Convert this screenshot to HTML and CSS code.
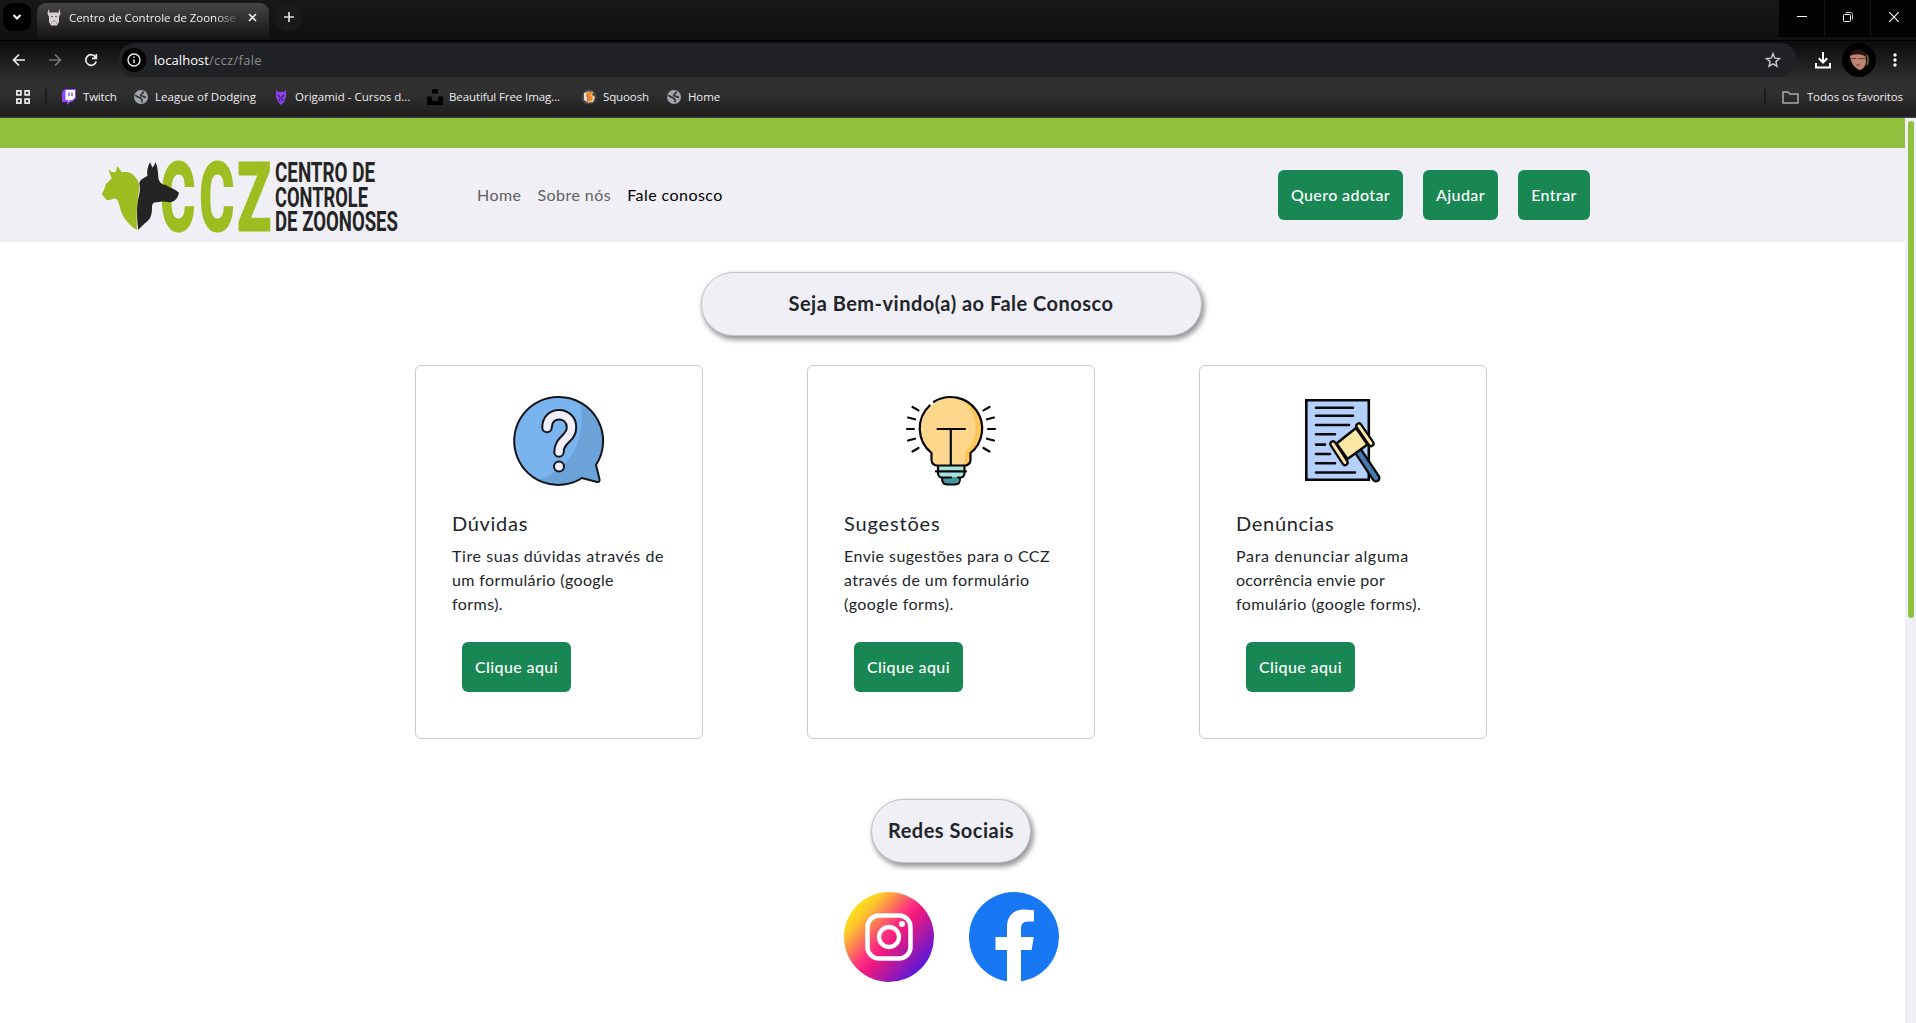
FILE: index.html
```html
<!DOCTYPE html>
<html lang="pt-BR">
<head>
<meta charset="utf-8">
<title>Centro de Controle de Zoonoses</title>
<link rel="stylesheet" href="styles.css">
</head>
<body>
<div class="browser">
  <div class="tabstrip">
    <div class="tab-search"><svg width="28" height="28" viewBox="0 0 28 28"><path d="M10.500 12l3.500 3.500 3.500-3.500" fill="none" stroke="#fff" stroke-width="2"/></svg></div>
    <div class="tab">
      <svg class="tab-favicon" width="14" height="17" viewBox="0 0 14 17"><path d="M1.500 0L3 3.500h8L12.500 0l1 4.500L12 8v5l-2 3.500H4L2 13V8L.5 4.500z" fill="#d8d0d0"/><path d="M2 1l1 3M12 1l-1 3M4 7.500h2M8 7.500h2M6 12h2M4 14h1M9 14h1" stroke="#666" stroke-width="1"/></svg>
      <span class="tab-title">Centro de Controle de Zoonose</span>
      <svg class="tab-close" width="9" height="9" viewBox="0 0 9 9"><path d="M1 1l7 7M8 1l-7 7" stroke="#eee" stroke-width="1.700"/></svg>
    </div>
    <div class="new-tab"><svg width="28" height="28" viewBox="0 0 28 28"><path d="M14 9v10M9 14h10" stroke="#ddd" stroke-width="1.700"/></svg></div>
    <div class="window-controls">
      <div class="win"><svg width="12" height="12" viewBox="0 0 12 12"><path d="M1 5.500h10" stroke="#fff"/></svg></div>
      <div class="win"><svg width="12" height="12" viewBox="0 0 12 12"><path d="M3.500 1.500h5a2 2 0 0 1 2 2v5" fill="none" stroke="#bbb"/><rect x="1.500" y="3.500" width="7" height="7" rx="1" fill="none" stroke="#fff"/></svg></div>
      <div class="win"><svg width="12" height="12" viewBox="0 0 12 12"><path d="M1.200 1.200l9.600 9.600M10.800 1.200l-9.600 9.600" stroke="#fff" stroke-width="1.100"/></svg></div>
    </div>
  </div>
  <div class="toolbar">
    <div class="nav-icons">
      <svg width="14" height="14" viewBox="0 0 14 14"><path d="M13 7H2M7 1.500L1.500 7 7 12.500" fill="none" stroke="#eee" stroke-width="1.700"/></svg>
      <svg width="14" height="14" viewBox="0 0 14 14"><path d="M1 7h11M7 1.500L12.500 7 7 12.500" fill="none" stroke="#777" stroke-width="1.700"/></svg>
      <svg width="14" height="14" viewBox="0 0 14 14"><path d="M11.600 4.200A5.300 5.300 0 1 0 12.200 8.500M12.300 1v4.300H8" fill="none" stroke="#eee" stroke-width="1.700"/></svg>
    </div>
    <div class="omnibox">
      <svg width="24" height="24" viewBox="0 0 24 24"><circle cx="12" cy="12" r="12" fill="#000"/><circle cx="12" cy="12" r="6" fill="none" stroke="#eee" stroke-width="1.400"/><path d="M12 11.500v3.500M12 8.600v1.500" stroke="#eee" stroke-width="1.400"/></svg>
      <div class="url"><span class="url-host">localhost</span><span class="url-path">/ccz/fale</span></div>
      <svg class="star" width="16" height="16" viewBox="0 0 16 16"><path d="M8 1.700l1.800 4.400 4.700.4-3.600 3.100 1.100 4.600L8 11.800l-4 2.400 1.100-4.600-3.600-3.100 4.700-.4z" fill="none" stroke="#c8c8c8" stroke-width="1.400"/></svg>
    </div>
    <svg class="download" width="16" height="17" viewBox="0 0 16 17"><path d="M8 0v10M3.800 6.300L8 10.500l4.200-4.200M1 11v4.500h14V11" fill="none" stroke="#fff" stroke-width="2"/></svg>
    <svg class="avatar" width="34" height="34" viewBox="0 0 34 34"><circle cx="17" cy="17" r="17" fill="#000"/><path d="M7.500 13c2-5 6-7 10.500-6.500 5 1 8.500 5 8.500 10.500s-4 10-9 10c-5-1-9-6-10-14z" fill="#2a1513"/><path d="M8 13c4-2 10-3 15.500.5l.5 6c-1 4-3 6.500-6 7.500-4-1-9-6-10-14z" fill="#c08474"/><path d="M9 15.500h5.500m2 0h6.500M14 22h4" stroke="#6b3c36" stroke-width="1.200"/><path d="M25 12c1.500 3 1.500 7 0 10" stroke="#65703d" stroke-width="1.500" fill="none"/></svg>
    <svg class="dots" width="4" height="14" viewBox="0 0 4 14"><g fill="#fff"><circle cx="2" cy="2" r="1.700"/><circle cx="2" cy="7" r="1.700"/><circle cx="2" cy="12" r="1.700"/></g></svg>
  </div>
  <div class="bookmarks">
    <svg class="apps" width="14" height="14" viewBox="0 0 14 14"><g fill="none" stroke="#eee" stroke-width="1.700"><rect x=".9" y=".9" width="4" height="4"/><rect x="9.100" y=".9" width="4" height="4"/><rect x=".9" y="9.100" width="4" height="4"/><rect x="9.100" y="9.100" width="4" height="4"/></g></svg>
    <div class="separator"></div>
    <div class="bookmark-list">
      <div class="bookmark tight"><svg width="16" height="16" viewBox="0 0 16 16"><path d="M1 3l3-3h11v9l-4 4H9l-3 3v-3H1z" fill="#9146ff"/><path d="M4.500 1H14v7.500L11.500 11H9l-2 2v-2H4.500z" fill="#fff"/><path d="M8 3.500v3.500M11 3.500v3.500" stroke="#9146ff" stroke-width="1.400"/></svg><span>Twitch</span></div>
      <div class="bookmark wide"><svg width="16" height="16" viewBox="0 0 16 16"><circle cx="8" cy="8" r="7" fill="#a1a5ab"/><path d="M2 6.500c2 0 2 1.800 4 1.800 2.500 0 1.500 2.200 3 2.400v2.500M13 8c-2 1-2-1-4-1s-1.500-2 .5-2.500l1-2" fill="none" stroke="#303030" stroke-width="1.700"/></svg><span>League of Dodging</span></div>
      <div class="bookmark"><svg width="16" height="16" viewBox="0 0 16 16"><path d="M3 1l2.500 2h5L13 1v7l-2 5-3 3-3-3-2-5z" fill="#8a42ee"/><path d="M5 6l2 2M11 6L9 8M6 10l1 2M10 10l-1 2M8 8v2" stroke="#32204d" stroke-width="1.200"/></svg><span>Origamid - Cursos d...</span></div>
      <div class="bookmark narrow"><svg width="16" height="16" viewBox="0 0 16 16"><path d="M5 0h6v4.500H5zM0 7.500h5V12h6V7.500h5V16H0z" fill="#000"/></svg><span>Beautiful Free Imag...</span></div>
      <div class="bookmark narrow"><svg width="16" height="16" viewBox="0 0 16 16"><circle cx="8" cy="8" r="7.500" fill="#4a4a4c"/><path d="M3 4l4-1.500 5 .5-1 3 3 2-2 5-5 .5L3 11z" fill="#f6d9bd"/><path d="M5.500 3.500l6.500-1-1 3-2 .5 3 2-1 4-5 1 1-4-2-2z" fill="#f08a24"/><path d="M6 6l1 3-1 3" fill="none" stroke="#8e6f94"/></svg><span>Squoosh</span></div>
      <div class="bookmark narrow"><svg width="16" height="16" viewBox="0 0 16 16"><circle cx="8" cy="8" r="7" fill="#a1a5ab"/><path d="M2 6.500c2 0 2 1.800 4 1.800 2.500 0 1.500 2.200 3 2.400v2.500M13 8c-2 1-2-1-4-1s-1.500-2 .5-2.500l1-2" fill="none" stroke="#303030" stroke-width="1.700"/></svg><span>Home</span></div>
    </div>
    <div class="separator"></div>
    <div class="all-bookmarks narrow"><svg width="17" height="13" viewBox="0 0 17 13"><path d="M1 1h5l2 2h8v9H1z" fill="none" stroke="#aaa" stroke-width="1.500" stroke-linejoin="round"/></svg><span>Todos os favoritos</span></div>
  </div>
</div>
<div class="viewport">
  <div class="page">
    <div class="topbar"></div>
    <header class="navbar">
      <svg class="logo" width="300" height="76" viewBox="0 0 300 76">
        <g class="logo-initials"><text x="60.500" y="73" textLength="34.500" lengthAdjust="spacingAndGlyphs">C</text><text x="99.500" y="73" textLength="34.500" lengthAdjust="spacingAndGlyphs">C</text><text x="137.500" y="73" textLength="33.500" lengthAdjust="spacingAndGlyphs">Z</text></g>
        <path d="M1.700 37.300L4 33 6 27l5.700-5.500L8.300 12c3 3.500 5 3.500 7.700 2.700L17.300 9l4.500 6.300c7-1 11 .7 14 5.400 4 5 4 9 3 14C37 48 36 60 37 73c-4-2-7-5-10.300-9-5-6-6-11-8.400-19-1-3.500-3-3.500-5-3.500-3 2-6 1.500-6.600 1.500z" fill="#9ebd20"/>
        <path d="M39.300 26.300c1-4 4-5 8.200-7.600C46.500 14 48 9 50 5.300l2.700 5.400 3-5.400c2 5 2.300 10 2.600 15.400 1 5 4 7 7.700 7.300 4 3 9 4 13 7.700l-1.300 4c-2 4-5 5.600-8.700 5.600-4-1-8-.8-11.700 0-4 0-5 1-5.300 4.700 0 5-.3 8-2.300 11.700C47 65 42 68 38.300 73c-1.300-9-1.600-17-1-25 1-9 4-14 2-21.700z" fill="#242424"/>
        <g class="logo-name"><text x="175" y="24.700" textLength="100" lengthAdjust="spacingAndGlyphs">CENTRO DE</text><text x="175" y="49.500" textLength="93" lengthAdjust="spacingAndGlyphs">CONTROLE</text><text x="175" y="74" textLength="123" lengthAdjust="spacingAndGlyphs">DE ZOONOSES</text></g>
      </svg>
      <nav class="menu"><a>Home</a><a>Sobre nós</a><a class="active">Fale conosco</a></nav>
      <div class="actions"><a class="btn btn-adopt">Quero adotar</a><a class="btn btn-help">Ajudar</a><a class="btn btn-login">Entrar</a></div>
    </header>
    <main>
      <h1 class="pill pill-wide">Seja Bem-vindo(a) ao Fale Conosco</h1>
      <section class="cards">
        <article class="card card-questions">
          <svg width="90" height="90" viewBox="0 0 90 90"><path d="M45 1a44 44 0 1 0 23 81l15 4c2 .5 3-1 2.500-3L82 69A44 44 0 0 0 45 1z" fill="#7ab4ef"/><path d="M66 7c6 30-4 65-42 77 16 7 31 5 44-2l15 4c2 .5 3-1 2.500-3L82 69c12-20 8-51-16-62z" fill="#6ba2d7"/><path d="M45 1a44 44 0 1 0 23 81l15 4c2 .5 3-1 2.500-3L82 69A44 44 0 0 0 45 1z" fill="none" stroke="#141419" stroke-width="2"/><path d="M33 31.500C33 14 57.500 15 57.500 31.500 57.500 43 45 43 45 56" fill="none" stroke="#141419" stroke-width="11.500" stroke-linecap="round"/><path d="M33 31.500C33 14 57.500 15 57.500 31.500 57.500 43 45 43 45 56" fill="none" stroke="#f0effa" stroke-width="7.500" stroke-linecap="round"/><circle cx="45" cy="70.500" r="5" fill="#f0effa" stroke="#141419" stroke-width="2"/></svg>
          <h2>Dúvidas</h2>
          <p><span>Tire suas dúvidas através de</span><span>um formulário (google</span><span>forms).</span></p>
          <a class="btn btn-card">Clique aqui</a>
        </article>
        <article class="card card-suggestions">
          <svg width="90" height="90" viewBox="0 0 90 90"><path d="M45 1.500A31.500 31.500 0 0 0 26 57v7c0 3 2 5 5 5h28c3 0 5-2 5-5v-7A31.500 31.500 0 0 0 45 1.500z" fill="#ffd78c"/><path d="M56 4c17 14 18 38 3 52v10l-3 3c5 1 8-1 8-5v-7C83 43 81 12 56 4z" fill="#ffc55b"/><path d="M31 70h28v9l-5 3-2 6H38l-3-6-4-4z" fill="#a9e1dc"/><path d="M36 81h17l-2 7H39z" fill="#45959c"/><path d="M28 5.800A31.500 31.500 0 0 1 64.500 57v7c0 3-2.500 5.500-5.500 5.500H31c-3 0-5.500-2.500-5.500-5.500v-7A31.500 31.500 0 0 1 23.700 9.500M31.500 33H59M44.800 33v36M32 70v7c0 3 2 4.500 4 4.500h9M58.500 70v7c0 3-2 4.500-4 4.500H52M30 75.400h30M36 82c0 5 2 6.500 5 6.500h8c4 0 5-2 5-6.500" fill="none" stroke="#080808" stroke-width="2.200" stroke-linecap="round"/><path d="M6.500 11l6 3.400M2 21.500l7 1.800M1 33h7M2 44.500l7-1.800M6.500 55.500l6-3.500M83.500 11l-6 3.400M88 21.500l-7 1.800M89 33h-7M88 44.500l-7-1.800M83.500 55.500l-6-3.500" stroke="#080808" stroke-width="2.200" stroke-linecap="round"/></svg>
          <h2>Sugestões</h2>
          <p><span>Envie sugestões para o CCZ</span><span>através de um formulário</span><span>(google forms).</span></p>
          <a class="btn btn-card">Clique aqui</a>
        </article>
        <article class="card card-reports">
          <svg width="90" height="90" viewBox="0 0 90 90"><path d="M8.300 4.300h62.500v79.500H8.300z" fill="#b5d0fc" stroke="#080808" stroke-width="2.600"/><path d="M18 11.700h37M18 19.700h37M18 29h33M18 38.300h19M18 48.600h9M18 58h14M18 67.300h19M18 76.500h39" stroke="#080808" stroke-width="2.600" stroke-linecap="round"/><path d="M60 55l18 27" stroke="#080808" stroke-width="9" stroke-linecap="round"/><path d="M60 55l18 27" stroke="#4878ac" stroke-width="4.500" stroke-linecap="round"/><path d="M38.500 47.500L58 32l11.500 16.500L49.500 63z" fill="#ffe8a5" stroke="#080808" stroke-width="2.500"/><path d="M35 48l12 18.500M61 30l12 17.500" stroke="#080808" stroke-width="7.500" stroke-linecap="round"/><path d="M35 48l12 18.500M61 30l12 17.500" stroke="#ffe8a5" stroke-width="3" stroke-linecap="round"/></svg>
          <h2>Denúncias</h2>
          <p><span>Para denunciar alguma</span><span>ocorrência envie por</span><span>fomulário (google forms).</span></p>
          <a class="btn btn-card">Clique aqui</a>
        </article>
      </section>
      <h1 class="pill pill-social">Redes Sociais</h1>
      <div class="social">
        <svg width="90" height="90" viewBox="0 0 90 90"><defs><linearGradient id="ig" x1=".12" y1=".18" x2=".86" y2=".84"><stop offset="0" stop-color="#fce01b"/><stop offset=".12" stop-color="#fcc72a"/><stop offset=".44" stop-color="#ff357f"/><stop offset=".56" stop-color="#f0197e"/><stop offset="1" stop-color="#5b18d9"/></linearGradient></defs><circle cx="45" cy="45" r="45" fill="url(#ig)"/><rect x="23.500" y="23.500" width="43" height="43" rx="11.500" fill="none" stroke="#fff" stroke-width="4.500"/><circle cx="45" cy="45" r="10" fill="none" stroke="#fff" stroke-width="4.300"/><circle cx="58" cy="32" r="3" fill="#fff"/></svg>
        <svg width="90" height="90" viewBox="0 0 90 90"><circle cx="45" cy="45" r="45" fill="#1877f2"/><path d="M38 90V58H26.500V45H38V35c0-12 8-18 18-17.500l9 .7v11.300h-6c-5 0-7 3-7 7V45h12.800l-2.200 13H52v32z" fill="#fff"/></svg>
      </div>
    </main>
  </div>
  <div class="scrollbar"><div class="thumb"></div></div>
</div>
</body>
</html>
```
FILE: styles.css
```css
* { box-sizing: border-box; }
body { margin: 0; height: 1023px; overflow: hidden; display: flex; flex-direction: column; background: #fff; color: #212529; font: 16px/24px Lato, sans-serif; }
svg { display: block; flex: none; overflow: visible; }
h1, h2, p { margin: 0; }

/* Browser chrome */
.browser { height: 118px; flex: none; color: #eee; background: linear-gradient(#181818 0, #101010 40px, #0c0c0c 42px, #303030 82px, #303030 92px, #1e1e1e 116px, #3c3c3c 117px); font: 11.5px/16px "Open Sans", sans-serif; white-space: nowrap; }
.tabstrip { height: 41px; display: flex; align-items: flex-start; padding: 3px 0 0 3px; border-bottom: 1px solid #000; }
.tab-search { width: 28px; height: 28px; border-radius: 9px; background: #000; }
.tab { width: 232px; height: 37px; margin-left: 6px; padding: 0 12px 8px 10px; display: flex; align-items: center; border-radius: 9px 9px 0 0; background: linear-gradient(#464646, #121212); }
.tab-title { width: 168px; margin-left: 8px; letter-spacing: -.04px; mask-image: linear-gradient(90deg, #000 146px, transparent 172px); }
.tab-close { margin-left: auto; }
.new-tab { width: 28px; height: 28px; margin-left: 6px; border-radius: 50%; background: #1a1a1a; }
.window-controls { margin: -3px 0 0 auto; display: flex; gap: 1px; background: #161616; }
.win { width: 45px; height: 37px; padding-bottom: 3px; display: flex; align-items: center; justify-content: center; background: #030303; }
.toolbar { height: 36px; padding: 2px 19px 0 12px; display: flex; align-items: center; }
.nav-icons { width: 106px; display: flex; gap: 22px; }
.omnibox { width: 1679px; height: 34px; padding: 0 16px 0 4px; display: flex; align-items: center; border-radius: 17px; background: #202124; font-size: 13px; }
.url { margin-left: 8px; }
.url-host { color: #fff; letter-spacing: .06px; }
.url-path { color: #8c8c8c; letter-spacing: .3px; }
.star { margin-left: auto; }
.download { margin-left: 18px; }
.avatar { margin-left: 11px; }
.dots { margin-left: 17px; }
.bookmarks { height: 41px; padding: 0 13px 1px 16px; display: flex; align-items: center; }
.separator { width: 2px; height: 16px; margin-left: 15px; background: #1b1b1b; }
.bookmark-list { margin: 0 auto 0 14px; display: grid; grid-template-columns: 72px 140px 154px 154px 85px auto; }
.bookmark { display: flex; align-items: center; gap: 6px; }
.wide { letter-spacing: .05px; }
.narrow { letter-spacing: -.11px; }
.tight { letter-spacing: -.2px; }
.all-bookmarks { margin-left: 16px; display: flex; align-items: center; gap: 8px; }

/* Site */
.viewport { flex: 1; min-height: 0; display: flex; }
.page { width: 1905px; }
.topbar { height: 30px; background: #91c03f; }
.navbar { height: 94px; padding: 0 315px 0 100px; display: flex; align-items: center; background: #f0eff5; }
.logo-initials { font: 700 94px/1 Roboto, sans-serif; fill: #9ebd20; stroke: #9ebd20; stroke-width: 3px; }
.logo-name { font: 700 28px/1 Roboto, sans-serif; fill: #242424; }
.menu { margin-left: 77px; display: flex; gap: 16px; color: #5f5f64; letter-spacing: .45px; white-space: nowrap; }
.menu .active { color: #000; }
.actions { margin-left: auto; display: flex; gap: 20px; }
.btn { height: 50px; display: flex; align-items: center; justify-content: center; border-radius: 6px; background: #198754; color: #fff; font-weight: 500; letter-spacing: .4px; white-space: nowrap; }
.btn-adopt { width: 125px; }
.btn-help { width: 75px; }
.btn-login { width: 72px; }
main { width: 1902px; display: flex; flex-direction: column; align-items: center; padding-top: 30px; }
.pill { height: 64px; padding-bottom: 2px; display: flex; align-items: center; justify-content: center; border: 1px solid #c3c3c8; border-radius: 32px; background: #f0eff5; box-shadow: 2px 3px 5px 1px rgba(0,0,0,.4); font-size: 20px; font-weight: 700; letter-spacing: .49px; white-space: nowrap; }
.pill-wide { width: 501px; }
.cards { margin: 29px 0 60px; display: flex; gap: 104px; }
.card { width: 288px; height: 374px; padding: 30px 36px 0; border: 1px solid #ccc; border-radius: 6px; white-space: nowrap; }
.card svg { margin: 0 auto 25px; }
.card h2 { margin-bottom: 9px; font-size: 20px; font-weight: 400; line-height: 24px; letter-spacing: .7px; }
.card p { display: flex; flex-direction: column; letter-spacing: .435px; }
.card-questions p span:first-child { letter-spacing: .57px; }
.card-questions p span:nth-child(2) { letter-spacing: .37px; }
.card-suggestions h2 { letter-spacing: .84px; }
.card-reports p span:first-child { letter-spacing: .7px; }
.card-reports p span:nth-child(2) { letter-spacing: .27px; }
.btn-card { width: 109px; margin: 26px 0 0 10px; }
.pill-social { width: 160px; }
.social { margin-top: 29px; display: flex; gap: 35px; }
.scrollbar { width: 11px; padding: 3px 2px 0 3px; background: #f0eff5; }
.thumb { height: 497px; border-radius: 3px; background: #91c03f; }
```
